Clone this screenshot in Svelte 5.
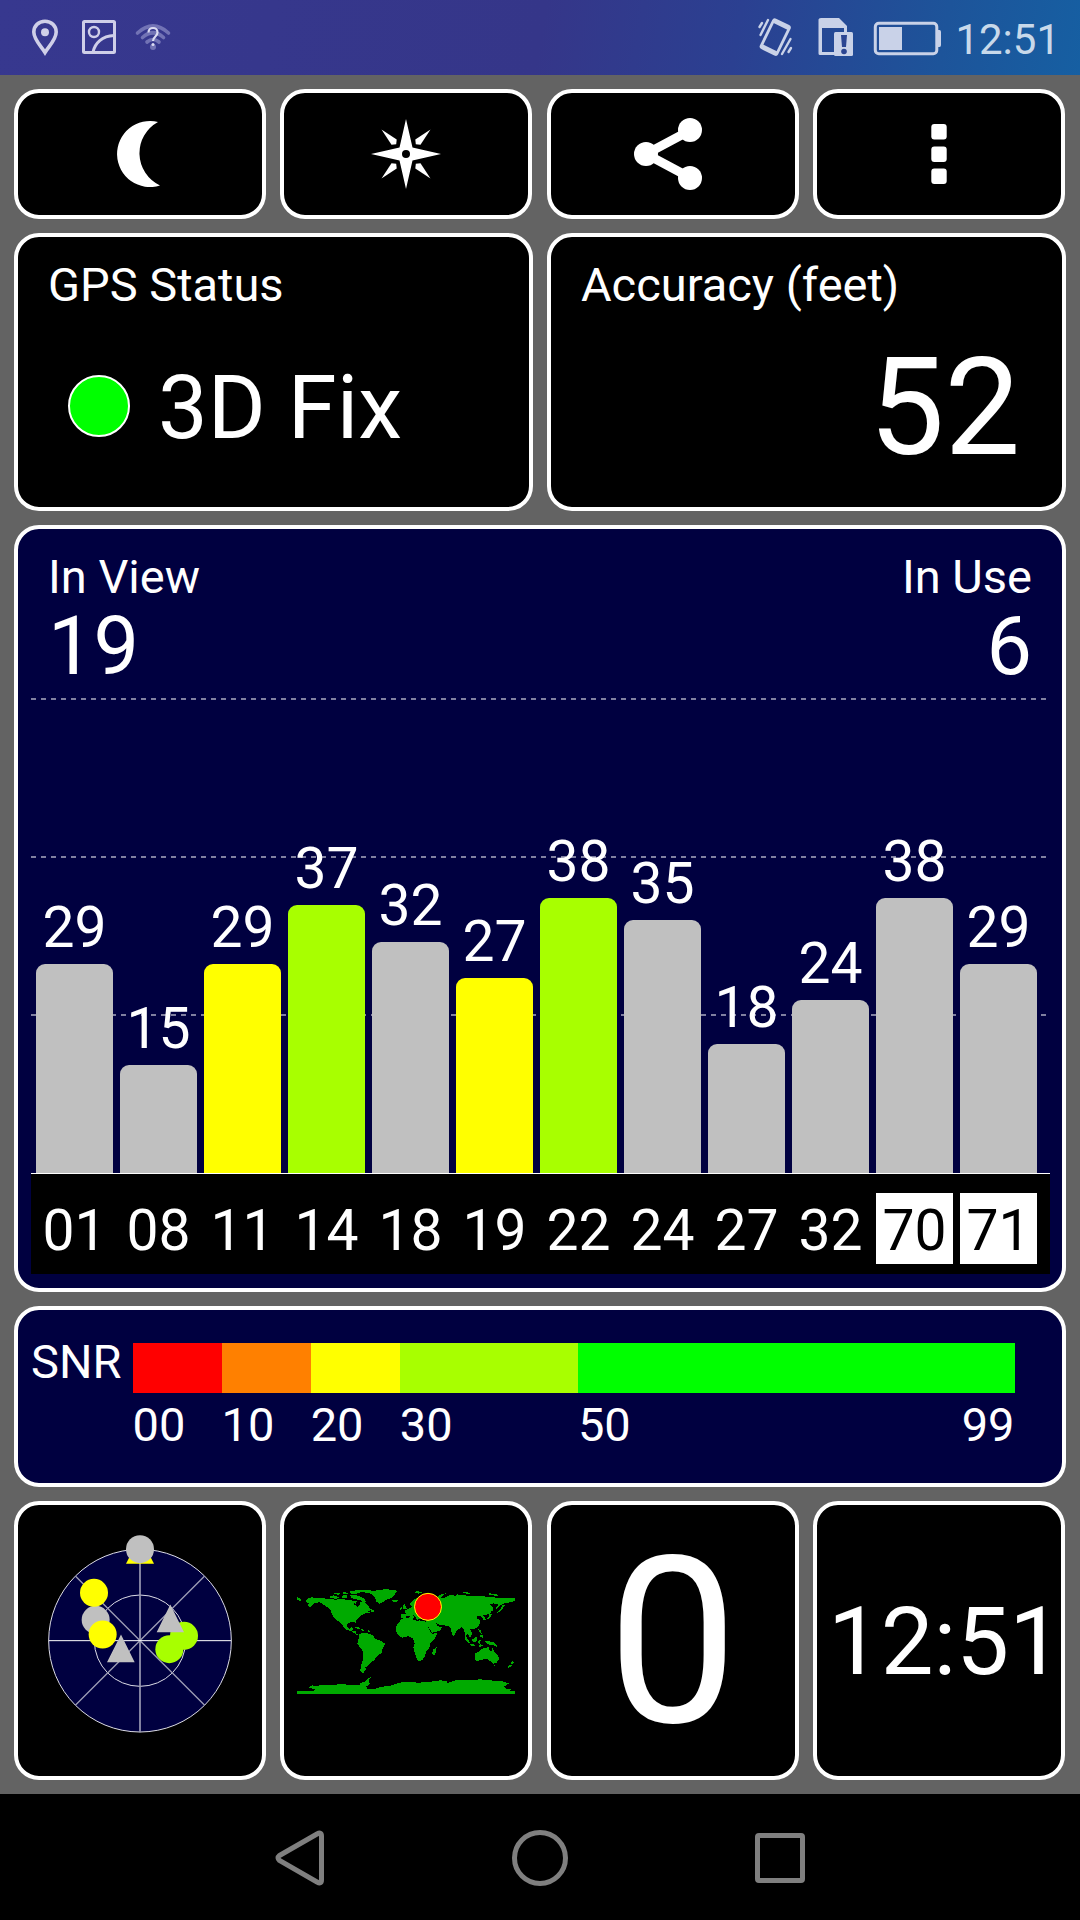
<script>
	const bars = [
		{ prn: '01', snr: 29, color: 'gray' },
		{ prn: '08', snr: 15, color: 'gray' },
		{ prn: '11', snr: 29, color: 'yellow' },
		{ prn: '14', snr: 37, color: 'lime' },
		{ prn: '18', snr: 32, color: 'gray' },
		{ prn: '19', snr: 27, color: 'yellow' },
		{ prn: '22', snr: 38, color: 'lime' },
		{ prn: '24', snr: 35, color: 'gray' },
		{ prn: '27', snr: 18, color: 'gray' },
		{ prn: '32', snr: 24, color: 'gray' },
		{ prn: '70', snr: 38, color: 'gray', glonass: true },
		{ prn: '71', snr: 29, color: 'gray', glonass: true }
	];

	let barHeight = (snr) => Math.round(snr * 7.27 - 1.4);
</script>

<div class="screen">
	<header class="statusbar">
		<svg class="notifications" width="150" height="75" viewBox="28 0 150 75">
			<path
				d="M45 21.2C38.5 21.2 33.8 26 33.8 32C33.8 39.5 41 46 45 52.5C49 46 56.2 39.5 56.2 32C56.2 26 51.500 21.200 45 21.200Z"
				fill="none"
				stroke="#cfcfe8"
				stroke-width="3.6"
			/>
			<circle cx="45" cy="32.300" r="4" fill="#cfcfe8" />
			<g fill="none" stroke="#cfcfe8" stroke-width="3">
				<rect x="83.500" y="21.500" width="31" height="31" rx="1" />
				<circle cx="94" cy="32" r="5" stroke-width="2.400" />
				<path d="M93 52C95 43 102 36 114 35.500" />
			</g>
			<g fill="none" stroke="#7273b5" stroke-width="3.600" stroke-linecap="round">
				<path d="M137.500 33Q153 19 168.500 33" />
				<path d="M142.500 37.500Q153 28 163.500 37.500" />
				<path d="M147 42Q153 37 159 42" />
			</g>
			<circle cx="153" cy="47" r="3" fill="#7273b5" />
			<path
				d="M148.500 32.500C148.500 26.500 157.500 26.500 157.500 32.500C157.500 36.500 153 36.500 153 41"
				fill="none"
				stroke="#dcdcf2"
				stroke-width="2.200"
			/>
			<circle cx="153" cy="44.500" r="1.500" fill="#dcdcf2" />
		</svg>
		<div class="system">
			<svg width="186" height="75" viewBox="757 0 186 75">
				<g stroke="#c9d2e8" fill="none">
					<g transform="rotate(26 776 37)">
						<rect x="767.500" y="21.500" width="17.500" height="31" rx="1.500" stroke-width="2.800" />
						<path d="M768 23h17M768 51h17" stroke-width="4" />
					</g>
					<g stroke-width="2.400" stroke-linecap="round">
						<path d="M769 20L761.500 35M763 23L760.500 27" />
						<path d="M791.500 39L783 54M792 48L789.500 52" />
					</g>
				</g>
				<path
					d="M822 18h18l8 8v7h-3v-5h-22v24h12v3h-14q-1.500 0-1.500-1.500v-34q0-1.500 2.500-1.500z"
					fill="#c9d2e8"
				/>
				<rect x="835" y="32" width="19" height="24" rx="1.500" fill="#c9d2e8" />
				<path d="M842 35h6l-1 12h-4z" fill="#2b4592" />
				<circle cx="845" cy="51.500" r="2.800" fill="#2b4592" />
				<rect x="876.300" y="23.300" width="61.500" height="30.500" rx="3.500" fill="none" stroke="#c9d2e8" stroke-width="3" />
				<rect x="880" y="27" width="23" height="23" fill="#c9d2e8" />
				<path d="M939 30h1.500q1.500 0 1.500 2v13q0 2-1.500 2H939z" fill="#c9d2e8" />
			</svg>
			<span class="clock">12:51</span>
		</div>
	</header>

	<main>
		<div class="row buttons">
			<button class="card" aria-label="Night mode">
				<svg width="70" height="70" viewBox="105 119 70 70">
					<path d="M158 122A33 33 0 1 0 160 185.500A35.600 35.600 0 0 1 158 122Z" fill="#fff" />
				</svg>
			</button>
			<button class="card" aria-label="Compass">
				<svg width="72" height="72" viewBox="-36 -36 72 72" fill="#fff">
					<path
						fill-rule="evenodd"
						d="M0-35L6.500-6.500L35 0L6.500 6.500L0 35L-6.500 6.500L-35 0L-6.500-6.500ZM4 0A4 4 0 1 0-4 0A4 4 0 1 0 4 0Z"
					/>
					{#each [0, 90, 180, 270] as angle}
						<path d="M-24.500-24.500L-9.300-14.500L-9.800-9.800L-14.500-9.300Z" transform="rotate({angle})" />
					{/each}
				</svg>
			</button>
			<button class="card" aria-label="Share">
				<svg width="80" height="80" viewBox="633 114 80 80" fill="#fff">
					<path d="M690 130.500L646 154L690 177.500" fill="none" stroke="#fff" stroke-width="9" />
					<circle cx="646" cy="154" r="12" />
					<circle cx="690" cy="130" r="12" />
					<circle cx="690" cy="178" r="12" />
				</svg>
			</button>
			<button class="card" aria-label="Menu">
				<svg width="16" height="60" viewBox="0 0 16 60" fill="#fff">
					<rect x="0.300" y="0" width="15.400" height="15.500" rx="3" />
					<rect x="0.300" y="22.500" width="15.400" height="15.500" rx="3" />
					<rect x="0.300" y="44.500" width="15.400" height="15.500" rx="3" />
				</svg>
			</button>
		</div>

		<div class="row info">
			<section class="card">
				<h2>GPS Status</h2>
				<div class="fix">
					<span class="led"></span>
					<span class="state">3D Fix</span>
				</div>
			</section>
			<section class="card">
				<h2>Accuracy (feet)</h2>
				<div class="accuracy">52</div>
			</section>
		</div>

		<section class="card signal">
			<div class="counts">
				<div>
					<h2>In View</h2>
					<div class="count">19</div>
				</div>
				<div class="in-use">
					<h2>In Use</h2>
					<div class="count">6</div>
				</div>
			</div>
			<div class="plot">
				{#each bars as bar}
					<div class="column">
						<span class="value">{bar.snr}</span>
						<div class="bar {bar.color}" style="height: {barHeight(bar.snr)}px"></div>
					</div>
				{/each}
			</div>
			<div class="prns">
				{#each bars as bar}
					<span class:glonass={bar.glonass}>{bar.prn}</span>
				{/each}
			</div>
		</section>

		<section class="card snr">
			<div class="legend">
				<span class="name">SNR</span>
				<div class="scale colors">
					<i class="c00"></i><i class="c10"></i><i class="c20"></i><i class="c30"></i><i class="c50"></i>
				</div>
			</div>
			<div class="scale numbers">
				<span>00</span>
				<span>10</span>
				<span>20</span>
				<span>30</span>
				<span class="last"><span>50</span><span>99</span></span>
			</div>
		</section>

		<div class="row bottom">
			<section class="card">
				<svg width="187" height="213" viewBox="141 131.500 561 639">
					<circle cx="420" cy="451.500" r="274" fill="#000040" stroke="#dcdce6" stroke-width="3" />
					<circle cx="420" cy="451.500" r="137" fill="none" stroke="#dcdce6" stroke-width="3" />
					<g stroke="#9c9cb4" stroke-width="4">
						<path d="M226 257.500L614 645.500M614 257.500L226 645.500" />
						<path d="M420 178V726" stroke-width="5" />
					</g>
					<path d="M146 451.500H694" stroke="#fff" stroke-width="3" />
					<path d="M378 221L420 139L462 221Z" fill="#ff0" />
					<circle cx="420" cy="177" r="42" fill="#c0c0c0" />
					<circle cx="287" cy="389" r="42" fill="#c0c0c0" />
					<circle cx="282" cy="308" r="42" fill="#ff0" />
					<circle cx="308" cy="433" r="42" fill="#ff0" />
					<circle cx="552" cy="437" r="42" fill="#a8ff00" />
					<circle cx="508" cy="477" r="42" fill="#a8ff00" />
					<path d="M363 433L404 516H321ZM511 343L552 426H470Z" fill="#c0c0c0" />
				</svg>
			</section>
			<section class="card">
				<svg width="218" height="106" viewBox="51 84 654 318">
					<g fill="#0a0" shape-rendering="crispEdges">
						<!-- North America -->
						<path
							d="M51 110L58 114L68 121L60 122L51 121ZM78 122L84 115L95 112L120 115L150 116L165 119L185 117L205 120L218 122L222 133L232 140L240 133L240 125L252 124L265 138L274 150L262 154L270 158L255 160L245 165L238 172L228 182L229 192L224 187L210 187L202 192L202 202L208 207L214 202L220 203L217 212L227 214L228 222L236 224L232 226L215 214L195 207L186 192L175 184L165 176L155 163L153 150L140 140L128 132L118 126L104 130L92 142L82 136L88 130L79 127Z"
						/>
						<path
							d="M150 110L160 106L174 110L178 115L164 116L152 114ZM162 100L176 98L185 103L172 104ZM184 107L200 105L202 113L188 114ZM189 97L206 98L202 103L190 102ZM210 106L224 104L236 108L252 116L258 126L250 130L240 120L226 118L214 114ZM208 95L226 91L262 90L258 95L240 97L228 102L212 101ZM218 124L230 123L228 131L220 130ZM274 148L282 151L280 157L273 154Z"
						/>
						<path d="M222 200L236 202L243 207L232 206ZM244 208L254 209L253 213L245 212ZM262 209L266 209L270 216L266 216Z" />
						<!-- Greenland and Iceland -->
						<path d="M250 96L262 91L285 92L320 87L340 91L354 92L345 102L338 112L318 120L305 128L298 131L288 124L285 112L275 102ZM334 120L352 119L354 124L342 127Z" />
						<!-- South America -->
						<path
							d="M238 222L248 218L262 220L280 226L285 237L300 241L315 251L308 265L305 278L292 288L283 300L272 308L264 318L256 322L258 330L250 333L254 339L243 337L241 330L243 318L248 300L250 275L240 262L232 250L236 236Z"
						/>
						<!-- Africa -->
						<path
							d="M363 178L372 175L395 171L398 178L412 183L418 181L436 184L442 197L450 213L457 221L472 219L465 235L450 250L448 265L438 276L436 286L428 299L418 303L411 300L405 280L400 262L404 250L398 235L385 228L368 233L358 228L347 213L350 197L357 187ZM460 268L470 262L468 275L462 287L456 282Z"
						/>
						<!-- Eurasia -->
						<path
							d="M363 175L363 163L378 161L374 152L386 147L395 140L388 132L396 124L408 115L425 108L445 112L470 112L480 104L498 100L486 108L482 116L498 112L510 104L528 108L530 103L548 105L570 108L610 109L650 113L690 113L705 115L705 123L690 127L672 130L660 137L650 148L648 145L655 133L640 130L628 133L634 138L638 148L630 160L620 164L610 166L618 178L610 180L605 170L592 168L592 176L600 180L600 190L592 203L580 208L570 208L578 222L570 232L562 220L558 228L566 245L556 230L552 208L545 202L532 210L526 220L522 230L516 222L512 206L504 198L488 195L475 193L468 188L472 197L486 203L480 212L456 218L444 200L438 188L440 178L420 176L410 180L408 172L398 164L404 174L396 176L388 166L380 168L374 176Z"
						/>
						<path
							d="M368 136L374 132L380 146L370 148ZM361 143L366 142L366 148L361 149ZM400 95L416 94L428 97L414 101ZM544 95L562 97L578 103L560 102ZM626 100L650 102L654 107L630 106ZM634 137L640 142L640 156L636 152ZM628 162L636 162L630 174L612 180L626 172ZM668 134L674 136L666 148L658 156L652 158L662 148Z"
						/>
						<!-- South-east Asia -->
						<path
							d="M553 230L562 236L572 250L566 250L556 238ZM568 251L586 254L586 258L570 256ZM577 238L590 230L592 240L586 248L578 245ZM594 242L604 240L598 246L602 254L596 252ZM595 208L602 210L606 222L600 220ZM602 225L610 226L608 234L600 230ZM614 242L628 244L640 246L652 256L652 261L640 256L630 256L618 248ZM594 257L612 255L600 262Z"
						/>
						<!-- Australia and New Zealand -->
						<path
							d="M585 280L598 275L602 268L614 263L626 262L628 271L634 275L637 262L642 274L655 287L657 298L650 308L640 311L632 304L622 297L606 299L590 304L586 298ZM640 314L648 314L645 319ZM696 303L702 308L696 314L692 312ZM692 314L696 318L686 324L682 321Z"
						/>
						<!-- Antarctica -->
						<path
							d="M51 393L100 393L104 388L84 382L96 376L110 378L130 374L160 375L190 371L200 374L240 374L238 369L252 366L262 357L272 352L266 362L270 372L258 380L262 386L285 387L305 380L330 378L358 368L390 365L410 368L440 367L480 361L500 363L503 369L530 360L560 361L600 358L640 362L665 363L687 370L672 380L680 388L692 388L690 393L705 393L705 402L51 402Z"
						/>
					</g>
					<circle cx="444" cy="140.500" r="40.500" fill="#f00" stroke="#ff0" stroke-width="3" />
				</svg>
			</section>
			<section class="card">
				<span class="speed">0</span>
			</section>
			<section class="card">
				<span class="time">12:51</span>
			</section>
		</div>
	</main>

	<nav>
		<svg width="534" height="60" viewBox="273 1827 534 60" fill="none" stroke="#7f7f7f" stroke-width="5">
			<path d="M279.500 1855.500L317 1834Q321.500 1831.500 321.500 1836V1880Q321.500 1884.500 317 1882L279.500 1860.500Q276.500 1858 279.500 1855.500Z" />
			<circle cx="540" cy="1858" r="25.500" />
			<rect x="757.500" y="1835.500" width="45" height="45" rx="1.500" />
		</svg>
	</nav>
</div>

<style>
	:global(body) {
		margin: 0;
		background: #000;
	}

	.screen {
		display: flex;
		flex-direction: column;
		width: 1080px;
		height: 1920px;
		overflow: hidden;
		background: #636363;
		color: #fff;
		font-family: Roboto, sans-serif;
	}

	.statusbar {
		display: flex;
		justify-content: space-between;
		height: 75px;
		padding: 0 20px 0 28px;
		background: linear-gradient(100deg, #37388f 0%, #353689 50%, #2b4091 68%, #1d549a 87%, #165fa2 100%);
	}

	.statusbar svg {
		display: block;
	}

	.system {
		display: flex;
		gap: 13px;
	}

	.clock {
		color: #c8d9ea;
		font-size: 42px;
		line-height: 79px;
	}

	main {
		display: flex;
		flex-direction: column;
		gap: 14px;
		height: 1719px;
		padding: 14px 14.5px 14px 14px;
		box-sizing: border-box;
	}

	.row {
		display: grid;
		grid-template-columns: repeat(4, 252px);
		gap: 14.33px;
	}

	.card {
		box-sizing: border-box;
		border: 4px solid #fff;
		border-radius: 25px;
		background: #000;
		color: #fff;
		overflow: hidden;
	}

	.buttons {
		height: 130px;
	}

	.buttons .card {
		display: flex;
		align-items: center;
		justify-content: center;
		padding: 0;
	}

	.info {
		grid-template-columns: repeat(2, 1fr);
		height: 278px;
	}

	.info .card {
		padding: 20px 41px 0 30px;
	}

	h2 {
		margin: 0;
		font-size: 47px;
		font-weight: 400;
		line-height: 56px;
	}

	.fix {
		display: flex;
		align-items: center;
		gap: 28px;
		margin: 43px 0 0 20px;
		font-size: 88.5px;
		line-height: 100px;
	}

	.state {
		margin: 2px 0 -2px;
	}

	.led {
		box-sizing: border-box;
		width: 62px;
		height: 62px;
		border: 2px solid #fff;
		border-radius: 50%;
		background: #0f0;
	}

	.accuracy {
		margin-top: 27px;
		font-size: 135px;
		line-height: 136px;
		text-align: right;
	}

	.signal {
		height: 767px;
		padding: 0 12px 0 13px;
		background: #000040;
	}

	.counts {
		display: flex;
		justify-content: space-between;
		box-sizing: border-box;
		height: 169px;
		padding: 20px 17.5px 0 17px;
	}

	.count {
		font-size: 81px;
		line-height: 84px;
	}

	.in-use {
		text-align: right;
	}

	.plot,
	.prns {
		display: flex;
		gap: 7px;
		padding-left: 5px;
	}

	.plot {
		align-items: flex-end;
		height: 475px;
		border-bottom: 1px solid #fff;
		background-image: repeating-linear-gradient(90deg, #8080a0 0 5px, transparent 5px 10px),
			repeating-linear-gradient(90deg, #8080a0 0 5px, transparent 5px 10px),
			repeating-linear-gradient(90deg, #8080a0 0 5px, transparent 5px 10px);
		background-size: 100% 2px;
		background-position:
			0 0,
			0 158px,
			0 316px;
		background-repeat: no-repeat;
	}

	.column {
		display: flex;
		flex-direction: column;
		width: 77px;
	}

	.value,
	.prns {
		font-size: 57px;
		text-align: center;
	}

	.value {
		margin-bottom: 8px;
		line-height: 57px;
	}

	.bar {
		border-radius: 9px 9px 0 0;
	}

	.gray {
		background: #c0c0c0;
	}

	.yellow {
		background: #ff0;
	}

	.lime {
		background: #a8ff00;
	}

	.prns {
		box-sizing: border-box;
		height: 100px;
		padding-top: 19px;
		background: #000;
	}

	.prns span {
		width: 77px;
		height: 67px;
		padding-top: 4px;
		line-height: 68px;
	}

	.prns .glonass {
		background: #fff;
		color: #000;
	}

	.snr {
		height: 181px;
		padding: 33px 47px 0 13px;
		background: #000040;
		font-size: 47px;
	}

	.legend {
		display: flex;
		justify-content: space-between;
	}

	.name {
		line-height: 38px;
	}

	.scale {
		display: grid;
		grid-template-columns: 10fr 10fr 10fr 20fr 49fr;
		width: 882px;
	}

	.colors {
		height: 50px;
	}

	.c00 {
		background: #f00;
	}

	.c10 {
		background: #ff8000;
	}

	.c20 {
		background: #ff0;
	}

	.c30 {
		background: #a8ff00;
	}

	.c50 {
		background: #0f0;
	}

	.numbers {
		margin-left: auto;
		line-height: 64px;
	}

	.last {
		display: flex;
		justify-content: space-between;
	}

	.bottom {
		height: 279px;
	}

	.bottom .card {
		display: flex;
		align-items: center;
		justify-content: center;
	}

	.speed {
		padding-top: 6px;
		font-size: 232px;
		line-height: 271px;
	}

	.time {
		padding: 3px 0 0 12px;
		font-size: 94px;
		line-height: 94px;
	}

	nav {
		display: flex;
		align-items: center;
		justify-content: center;
		height: 126px;
		background: #000;
	}
</style>
